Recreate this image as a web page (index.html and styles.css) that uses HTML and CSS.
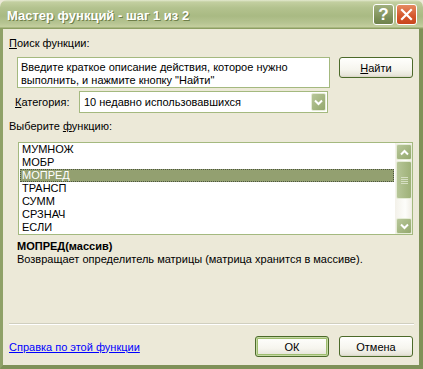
FILE: index.html
```html
<!DOCTYPE html>
<html lang="ru">

<head>
    <meta charset="UTF-8">
    <title>Мастер функций - шаг 1 из 2</title>
    <link rel="stylesheet" href="styles.css">
</head>

<body>
    <div class="window">
        <div class="titlebar">
            <span class="title">Мастер функций - шаг 1 из 2</span>
            <div class="caption-btns">
                <span class="cap-btn help">?</span>
                <span class="cap-btn close">
                    <svg width="13" height="13" viewBox="0 0 13 13"><path d="M2 2 L11 11 M11 2 L2 11" stroke="#fff" stroke-width="2.2" stroke-linecap="square"/></svg>
                </span>
            </div>
        </div>

        <div class="client">
            <div class="label"><u>П</u>оиск функции:</div>

            <div class="search-row">
                <div class="textbox">Введите краткое описание действия, которое нужно<br>выполнить, и нажмите кнопку "Найти"</div>
                <button class="btn"><u>Н</u>айти</button>
            </div>

            <div class="category-row">
                <span class="category-label"><u>К</u>атегория:</span>
                <div class="combo">
                    <span class="combo-text">10 недавно использовавшихся</span>
                    <span class="arrow-btn">
                        <svg width="9" height="7" viewBox="0 0 9 7"><path d="M1 1.5 L4.5 5 L8 1.5" fill="none" stroke="#fff" stroke-width="2"/></svg>
                    </span>
                </div>
            </div>

            <div class="label list-label">Выберите <u>ф</u>ункцию:</div>

            <div class="listbox">
                <ul class="items">
                    <li>МУМНОЖ</li>
                    <li>МОБР</li>
                    <li class="selected">МОПРЕД</li>
                    <li>ТРАНСП</li>
                    <li>СУММ</li>
                    <li>СРЗНАЧ</li>
                    <li>ЕСЛИ</li>
                </ul>
                <div class="scrollbar">
                    <span class="arrow-btn sb-btn">
                        <svg width="9" height="7" viewBox="0 0 9 7"><path d="M1 5.5 L4.5 2 L8 5.5" fill="none" stroke="#fff" stroke-width="2"/></svg>
                    </span>
                    <span class="thumb"><span class="grip"></span></span>
                    <span class="track"></span>
                    <span class="arrow-btn sb-btn">
                        <svg width="9" height="7" viewBox="0 0 9 7"><path d="M1 1.5 L4.5 5 L8 1.5" fill="none" stroke="#fff" stroke-width="2"/></svg>
                    </span>
                </div>
            </div>

            <div class="func-sig">МОПРЕД(массив)</div>
            <div class="func-desc">Возвращает определитель матрицы (матрица хранится в массиве).</div>

            <div class="separator"></div>

            <div class="footer">
                <a href="#" class="help-link">Справка по этой функции</a>
                <div class="footer-btns">
                    <button class="btn default">ОК</button>
                    <button class="btn">Отмена</button>
                </div>
            </div>
        </div>
    </div>
</body>
</html>
```

FILE: styles.css
```css
body {
    margin: 0;
    padding: 0;
    font-family: 'Liberation Sans', Arial, sans-serif;
    font-size: 11px;
    color: #000;
}

.window {
    width: 423px;
    height: 369px;
    display: flex;
    flex-direction: column;
    background-color: #ece9d8;
}

/* Title bar */
.titlebar {
    height: 29px;
    flex-shrink: 0;
    box-sizing: border-box;
    display: flex;
    justify-content: space-between;
    align-items: flex-start;
    background: linear-gradient(to bottom, #e4e9cf 0px, #c3cfa0 2px, #b3c28e 8px, #a9ba83 16px, #b6c492 23px, #c4cf9f 27px, #8d9f63 28px);
    border-radius: 7px 7px 0 0;
}

.titlebar .title {
    margin: 8px 0 0 7px;
    font-size: 13px;
    font-weight: 700;
    color: #fff;
    text-shadow: 1px 1px 0 #6f7f4a;
}

.caption-btns {
    display: flex;
    gap: 2px;
    margin: 4px 6px 0 0;
}

.cap-btn {
    width: 19px;
    height: 19px;
    border: 1px solid #fff;
    border-radius: 3px;
    display: flex;
    align-items: center;
    justify-content: center;
}

.cap-btn.help {
    background: linear-gradient(to bottom, #a2b07e, #7b8e57 70%, #6f824c);
    color: #fff;
    font-size: 17px;
    font-weight: 700;
}

.cap-btn.close {
    background: linear-gradient(to bottom, #e58a62, #d4562b 60%, #c8461d);
}

/* Client area */
.client {
    flex: 1;
    display: flex;
    flex-direction: column;
    border-left: 3px solid #8fa168;
    border-right: 4px solid #7f9158;
    border-bottom: 4px solid #7f9158;
    padding: 8px 6px 8px 6px;
}

.label {
    line-height: 13px;
}

.label u,
.category-label u,
.btn u {
    text-decoration: underline;
}

.search-row {
    display: flex;
    align-items: flex-start;
    gap: 9px;
    margin: 7px 0 0 8px;
}

.textbox {
    width: 313px;
    height: 31px;
    box-sizing: border-box;
    border: 1px solid #a4b97f;
    background-color: #fff;
    padding: 3px 0 0 3px;
    line-height: 13px;
}

.btn {
    width: 74px;
    height: 21px;
    padding: 0;
    font-family: inherit;
    font-size: 11px;
    color: #000;
    border: 1px solid #4c6a2a;
    border-radius: 3px;
    background: linear-gradient(to bottom, #fffffd 0%, #f6f5ee 60%, #e8e6db 90%, #d8d4c4 100%);
}

.btn.default {
    box-shadow: inset 0 0 0 1px #c5d8a4, inset 0 0 0 2px #9dbd6e;
}

.category-row {
    display: flex;
    align-items: center;
    margin: 3px 0 0 6px;
    height: 22px;
}

.category-label {
    width: 64px;
}

.combo {
    width: 249px;
    height: 22px;
    box-sizing: border-box;
    border: 1px solid #a4b97f;
    background-color: #fff;
    display: flex;
    align-items: center;
    justify-content: space-between;
    padding: 1px 1px 1px 4px;
}

.arrow-btn {
    width: 15px;
    height: 18px;
    box-sizing: border-box;
    display: flex;
    align-items: center;
    justify-content: center;
    border: 1px solid #e5ecd6;
    border-radius: 2px;
    background: linear-gradient(to bottom right, #b8c79a, #94a86d);
}

.list-label {
    margin-top: 7px;
}

.listbox {
    margin: 9px 0 0 9px;
    width: 395px;
    height: 93px;
    box-sizing: border-box;
    border: 1px solid #a4b97f;
    background-color: #fff;
    display: flex;
}

.items {
    list-style: none;
    margin: 0;
    padding: 0 1px;
    flex: 1;
}

.items li {
    height: 13px;
    line-height: 13px;
    padding-left: 2px;
    box-sizing: border-box;
}

.items li.selected {
    background-color: #93a070;
    color: #fff;
    outline: 1px dotted #4d5540;
    outline-offset: -1px;
}

.scrollbar {
    width: 17px;
    display: flex;
    flex-direction: column;
    background: linear-gradient(to right, #f3f1e9, #fdfdfa 60%, #f0eee5);
}

.sb-btn {
    width: 16px;
    height: 16px;
    margin: 1px 0 0 1px;
}

.thumb {
    width: 16px;
    height: 38px;
    margin: 1px 0 0 1px;
    box-sizing: border-box;
    border: 1px solid #e5ecd6;
    border-radius: 2px;
    background: linear-gradient(to right, #b7c698, #9eb178);
    display: flex;
    align-items: center;
    justify-content: center;
}

.grip {
    width: 7px;
    height: 7px;
    background: repeating-linear-gradient(to bottom, #d6dfc2 0, #d6dfc2 1px, transparent 1px, transparent 2px);
}

.track {
    flex: 1;
}

.func-sig {
    margin: 5px 0 0 8px;
    font-weight: 700;
    line-height: 13px;
}

.func-desc {
    margin-left: 8px;
    line-height: 13px;
}

.separator {
    margin-top: auto;
    height: 1px;
    border-top: 1px solid #d0cfbf;
    border-bottom: 1px solid #fff;
    box-sizing: content-box;
    height: 0;
    width: 405px;
}

.footer {
    margin-top: 11px;
    display: flex;
    justify-content: space-between;
    align-items: center;
}

.help-link {
    color: #0000ff;
    text-decoration: underline;
}

.footer-btns {
    display: flex;
    gap: 10px;
}
```
